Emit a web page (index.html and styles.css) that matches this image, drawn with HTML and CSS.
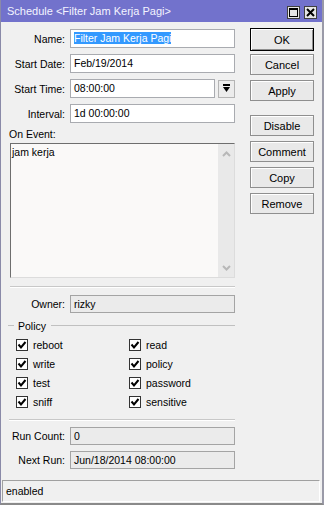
FILE: index.html
```html
<!DOCTYPE html>
<html lang="en">

<head>
  <meta charset="UTF-8" />
  <title>Schedule &lt;Filter Jam Kerja Pagi&gt;</title>
  <meta name="viewport" content="width=device-width, initial-scale=1.0" />
  <link rel="stylesheet" href="styles.css">
</head>

<body>
  <div class="window">
    <div class="titlebar">
      <span class="title">Schedule &lt;Filter Jam Kerja Pagi&gt;</span>
      <div class="title-btns">
        <span class="tb-btn">
          <svg width="9" height="9" viewBox="0 0 9 9"><rect x="0.5" y="0.5" width="8" height="8" fill="none" stroke="#000" /><rect x="0" y="0" width="9" height="2" fill="#000" /></svg>
        </span>
        <span class="tb-btn">
          <svg width="9" height="9" viewBox="0 0 9 9"><path d="M1 1 L8 8 M8 1 L1 8" stroke="#000" stroke-width="2" /></svg>
        </span>
      </div>
    </div>

    <div class="body">
      <div class="form">
        <div class="row">
          <label>Name:</label>
          <div class="field"><span class="selected">Filter Jam Kerja Pagi</span></div>
        </div>
        <div class="row">
          <label>Start Date:</label>
          <div class="field">Feb/19/2014</div>
        </div>
        <div class="row">
          <label>Start Time:</label>
          <div class="field short">08:00:00</div>
          <div class="drop-btn">
            <svg width="9" height="9" viewBox="0 0 9 9"><rect x="1" y="0" width="7" height="2" fill="#000" /><path d="M1 3 H8 L4.5 8 Z" fill="#000" /></svg>
          </div>
        </div>
        <div class="row">
          <label>Interval:</label>
          <div class="field">1d 00:00:00</div>
        </div>

        <div class="event-label">On Event:</div>
        <div class="event-box">
          <div class="event-text">jam kerja</div>
          <div class="scrollbar">
            <svg width="9" height="6" viewBox="0 0 9 6"><path d="M1 5 L4.5 1.5 L8 5" fill="none" stroke="#b8b8b8" stroke-width="2" /></svg>
            <svg width="9" height="6" viewBox="0 0 9 6"><path d="M1 1 L4.5 4.5 L8 1" fill="none" stroke="#b8b8b8" stroke-width="2" /></svg>
          </div>
        </div>

        <div class="sep"></div>

        <div class="row small">
          <label>Owner:</label>
          <div class="field disabled">rizky</div>
        </div>

        <div class="group-head">
          <span class="dash"></span>
          <span>Policy</span>
          <span class="line"></span>
        </div>

        <div class="policy">
          <div class="check"><span class="box"></span>reboot</div>
          <div class="check"><span class="box"></span>read</div>
          <div class="check"><span class="box"></span>write</div>
          <div class="check"><span class="box"></span>policy</div>
          <div class="check"><span class="box"></span>test</div>
          <div class="check"><span class="box"></span>password</div>
          <div class="check"><span class="box"></span>sniff</div>
          <div class="check"><span class="box"></span>sensitive</div>
        </div>

        <div class="sep sep2"></div>

        <div class="row small">
          <label>Run Count:</label>
          <div class="field disabled">0</div>
        </div>
        <div class="row small">
          <label>Next Run:</label>
          <div class="field disabled">Jun/18/2014 08:00:00</div>
        </div>
      </div>

      <div class="buttons">
        <button class="btn default">OK</button>
        <button class="btn">Cancel</button>
        <button class="btn">Apply</button>
        <button class="btn spaced">Disable</button>
        <button class="btn">Comment</button>
        <button class="btn">Copy</button>
        <button class="btn">Remove</button>
      </div>
    </div>

    <div class="status">enabled</div>
  </div>
</body>

</html>
```

FILE: styles.css
```css
/* MikroTik style schedule dialog */
body {
  margin: 0;
  background: #f0f0f0;
  font-family: 'Liberation Sans', Arial, sans-serif;
  font-size: 10.5px;
  color: #000;
}

.window {
  width: 324px;
  height: 505px;
  box-sizing: border-box;
  border-left: 1px solid #8a8aa8;
  border-right: 2px solid #9a9aa8;
  border-bottom: 2px solid #8a8a8a;
  display: flex;
  flex-direction: column;
  background: #f0f0f0;
}

.titlebar {
  height: 22px;
  background: #7272cc;
  display: flex;
  align-items: center;
  padding: 0 5px 0 6px;
  flex: none;
}

.title {
  color: #f4f4ff;
  font-size: 11px;
  flex: 1;
}

.title-btns {
  display: flex;
  gap: 4px;
  margin-top: 3px;
}

.tb-btn {
  width: 13px;
  height: 13px;
  box-sizing: border-box;
  background: #e6e6e6;
  border: 1px solid #404040;
  display: flex;
  align-items: center;
  justify-content: center;
}

.body {
  flex: 1;
  display: flex;
  padding-top: 7px;
}

.form {
  width: 227px;
  margin-left: 7px;
}

.row {
  display: flex;
  align-items: center;
  height: 19px;
  margin-bottom: 6px;
}

.row label {
  width: 57px;
  text-align: right;
  margin-right: 5px;
  flex: none;
}

.field {
  flex: 1;
  height: 19px;
  box-sizing: border-box;
  border: 1px solid #a9abb0;
  background: #fff;
  padding: 0 3px;
  line-height: 17px;
  white-space: nowrap;
}

.field.short {
  flex: none;
  width: 145px;
}

.field.disabled {
  background: #ebebeb;
  border-color: #a4a4a4;
}

.row.small,
.row.small .field {
  height: 18px;
}

.row.small .field {
  line-height: 16px;
}

.selected {
  background: #3399ff;
  color: #fff;
}

.drop-btn {
  width: 18px;
  height: 18px;
  box-sizing: border-box;
  margin-left: 3px;
  border: 1px solid #b4b4b4;
  background: #ececec;
  display: flex;
  align-items: center;
  justify-content: center;
}

.event-label {
  height: 13px;
  line-height: 13px;
  margin-top: -1px;
  margin-bottom: 2px;
  margin-left: 1px;
}

.event-box {
  margin-left: 2px;
  height: 135px;
  box-sizing: border-box;
  border-top: 1px solid #6e6e6e;
  border-left: 1px solid #6e6e6e;
  border-bottom: 1px solid #dcdcdc;
  border-right: 1px solid #dcdcdc;
  background: #faf9f8;
  display: flex;
}

.event-text {
  flex: 1;
  padding: 2px 1px;
}

.scrollbar {
  width: 16px;
  background: #e9e9e9;
  display: flex;
  flex-direction: column;
  justify-content: space-between;
  align-items: center;
  padding: 7px 0 6px;
}

.sep {
  height: 1px;
  border-bottom: 1px solid #fff;
  background: #c8c8c8;
  margin: 8px 0 7px 2px;
}

.sep2 {
  margin: 8px 0 6px 1px;
}

.group-head {
  display: flex;
  align-items: center;
  height: 13px;
  margin-top: 2px;
  margin-bottom: 3px;
}

.group-head .dash {
  width: 6px;
  height: 1px;
  background: #c0c0c0;
  margin-right: 4px;
}

.group-head .line {
  flex: 1;
  height: 1px;
  background: #c0c0c0;
  margin-left: 5px;
}

.policy {
  display: grid;
  grid-template-columns: 113px 1fr;
  padding-left: 8px;
}

.check {
  display: flex;
  align-items: center;
  height: 19px;
}

.check .box {
  width: 10px;
  height: 10px;
  border: 1px solid #333;
  background: #fff url("data:image/svg+xml,%3Csvg xmlns='http://www.w3.org/2000/svg' width='10' height='10'%3E%3Cpath d='M1.5 4.5 L4 7.5 L8.5 2' fill='none' stroke='%23000' stroke-width='2'/%3E%3C/svg%3E") no-repeat;
  margin-right: 5px;
}

.buttons {
  width: 64px;
  margin-left: 15px;
  display: flex;
  flex-direction: column;
  gap: 5px;
}

.btn {
  height: 21px;
  padding: 0;
  font-family: inherit;
  font-size: 11px;
  color: #000;
  background: #e9e9e9;
  border: 1px solid #8f8f8f;
  box-shadow: inset 1px 1px 0 #fff;
}

.btn.default {
  height: 23px;
  margin-top: -1px;
  margin-bottom: -2px;
  border: 1px solid #000;
  box-shadow: inset 1px 1px 0 #fff, inset -1px -1px 0 #8f8f8f;
}

.btn.spaced {
  margin-top: 9px;
}

.status {
  flex: none;
  height: 22px;
  box-sizing: border-box;
  margin: 0 2px 1px 1px;
  border-top: 1px solid #a0a0a0;
  border-left: 1px solid #a0a0a0;
  border-right: 1px solid #fff;
  border-bottom: 1px solid #fff;
  line-height: 20px;
  padding-left: 3px;
}
```
